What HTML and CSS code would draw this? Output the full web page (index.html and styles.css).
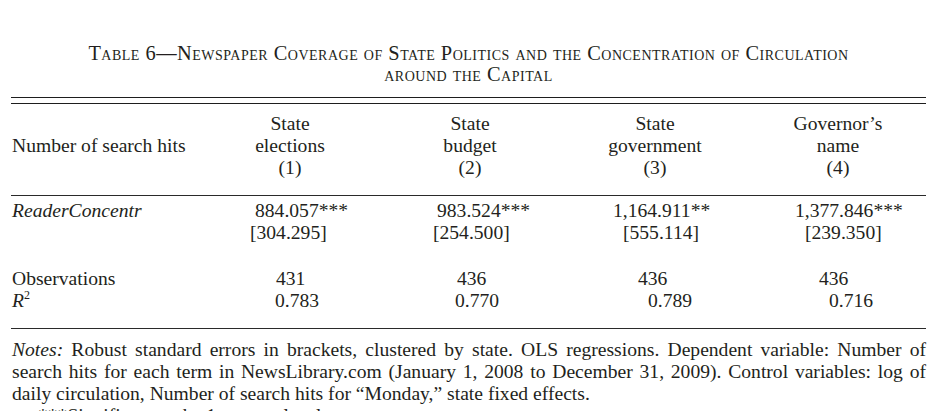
FILE: index.html
```html
<!DOCTYPE html>
<html>
<head>
<meta charset="utf-8">
<link rel="stylesheet" href="styles.css">
</head>
<body>
<div class="page">
  <h1 class="title">Table 6—Newspaper Coverage of State Politics and the Concentration of Circulation<br>around the Capital</h1>
  <div class="double-rule"></div>
  <div class="row head">
    <div class="label">Number of search hits</div>
    <div class="hcell">State<br>elections<br>(1)</div>
    <div class="hcell">State<br>budget<br>(2)</div>
    <div class="hcell">State<br>government<br>(3)</div>
    <div class="hcell">Governor’s<br>name<br>(4)</div>
  </div>
  <div class="row body coef-block">
    <div class="label"><i>ReaderConcentr</i></div>
    <div class="cell c1"><span class="coef">884.057***</span><span class="se">[304.295]</span></div>
    <div class="cell c2"><span class="coef">983.524***</span><span class="se">[254.500]</span></div>
    <div class="cell c3"><span class="coef">1,164.911**</span><span class="se">[555.114]</span></div>
    <div class="cell c4"><span class="coef">1,377.846***</span><span class="se">[239.350]</span></div>
  </div>
  <div class="row body stats-block">
    <div class="label">Observations<br><i>R</i><sup>2</sup></div>
    <div class="cell c1"><span class="obs">431</span><span class="r2">0.783</span></div>
    <div class="cell c2"><span class="obs">436</span><span class="r2">0.770</span></div>
    <div class="cell c3"><span class="obs">436</span><span class="r2">0.789</span></div>
    <div class="cell c4"><span class="obs">436</span><span class="r2">0.716</span></div>
  </div>
  <div class="notes">
    <p class="note"><i>Notes:</i> Robust standard errors in brackets, clustered by state. OLS regressions. Dependent variable: Number of search hits for each term in NewsLibrary.com (January 1, 2008 to December 31, 2009). Control variables: log of daily circulation, Number of search hits for “Monday,” state fixed effects.</p>
    <p class="note sig">***Significant at the 1 percent level.</p>
  </div>
</div>
</body>
</html>
```
FILE: styles.css
```css
html, body {
  margin: 0;
  padding: 0;
  background: #ffffff;
}
body {
  font-family: "Liberation Serif", "Times New Roman", serif;
  color: #231f20;
  font-size: 19.6px;
  line-height: 22px;
  overflow: hidden;
}
.page {
  width: 915px;
  margin-left: 11px;
  padding-top: 43px;
}
.title {
  margin: 0;
  font-weight: normal;
  font-size: 20.4px;
  line-height: 21px;
  font-variant: small-caps;
  text-align: center;
  letter-spacing: 0.5px;
}
.double-rule {
  margin-top: 12px;
  height: 5px;
  border-top: 1px solid #1e1e1e;
  border-bottom: 1px solid #1e1e1e;
}
.row {
  display: grid;
  grid-template-columns: 189px 180px 180px 190px 176px;
}
.head {
  padding-top: 9px;
  padding-bottom: 16px;
  border-bottom: 1px solid #2a2a2a;
}
.head .label {
  align-self: center;
}
.hcell {
  text-align: center;
}
.label {
  padding-left: 1px;
}
.cell {
  display: flex;
  flex-direction: column;
  white-space: nowrap;
}
.coef-block {
  padding-top: 4px;
}
.stats-block {
  padding-top: 24px;
  padding-bottom: 16px;
  border-bottom: 1px solid #2a2a2a;
}
sup {
  font-size: 12px;
  line-height: 0;
  vertical-align: 8px;
}
.c1 .coef { padding-left: 55px; }
.c1 .se { padding-left: 50px; }
.c1 .obs { padding-left: 76px; }
.c1 .r2 { padding-left: 75px; }
.c2 .coef { padding-left: 57px; }
.c2 .se { padding-left: 53px; }
.c2 .obs { padding-left: 77px; }
.c2 .r2 { padding-left: 75px; }
.c3 .coef { padding-left: 53px; }
.c3 .se { padding-left: 63px; }
.c3 .obs { padding-left: 78px; }
.c3 .r2 { padding-left: 88px; }
.c4 .coef { padding-left: 45px; }
.c4 .se { padding-left: 55px; }
.c4 .obs { padding-left: 69px; }
.c4 .r2 { padding-left: 79px; }
.notes {
  padding-top: 10px;
}
.note {
  margin: 0;
  text-align: justify;
  padding-left: 1px;
}
.sig {
  text-indent: 26px;
}
```
